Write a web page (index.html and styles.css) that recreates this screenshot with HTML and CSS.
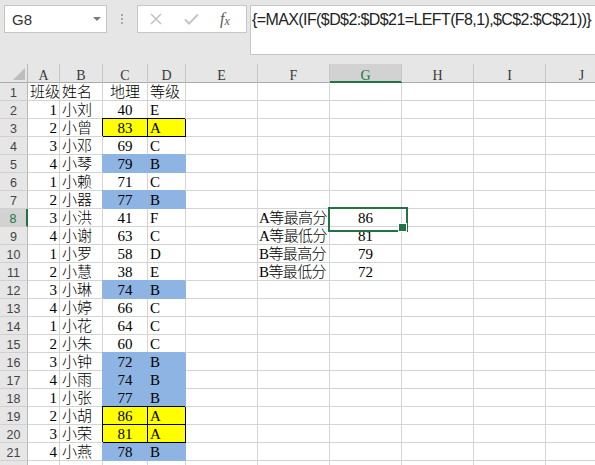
FILE: index.html
```html
<!DOCTYPE html>
<html lang="zh">
<head>
<meta charset="utf-8">
<link rel="stylesheet" href="styles.css">
</head>
<body>
<div class="toolbar">
  <div class="namebox"><span>G8</span><svg class="caret" width="8" height="4" viewBox="0 0 8 4"><polygon points="0,0 8,0 4,4" fill="#7a7a7a"/></svg></div>
  <div class="sep"><i></i><i></i><i></i></div>
  <div class="fxbox">
    <svg class="ic-x" width="12" height="12" viewBox="0 0 12 12"><path d="M1 1L11 11M11 1L1 11" stroke="#bdbdbd" stroke-width="1.4" fill="none"/></svg>
    <svg class="ic-ok" width="15" height="12" viewBox="0 0 15 12"><path d="M1 6.5L5 10.5L14 1.5" stroke="#c4c4c4" stroke-width="2" fill="none"/></svg>
    <span class="fx">f<span class="fxx">x</span></span>
  </div>
  <div class="formula">{=MAX(IF($D$2:$D$21=LEFT(F8,1),$C$2:$C$21))}</div>
</div>
<div class="sheet">
  <div class="grid">
    <div class="corner"><svg width="12" height="12" viewBox="0 0 12 12"><polygon points="12,0 12,12 0,12" fill="#bdbdbd"/></svg></div>
    <div class="h">A</div><div class="h">B</div><div class="h">C</div><div class="h">D</div><div class="h">E</div><div class="h">F</div><div class="h hs">G</div><div class="h">H</div><div class="h">I</div><div class="h">J</div>

    <div class="r">1</div><div class="c t">班级</div><div class="c t">姓名</div><div class="c m">地理</div><div class="c t">等级</div><div class="c"></div><div class="c"></div><div class="c"></div><div class="c"></div><div class="c"></div><div class="c"></div>
    <div class="r">2</div><div class="c n">1</div><div class="c t">小刘</div><div class="c m">40</div><div class="c t">E</div><div class="c"></div><div class="c"></div><div class="c"></div><div class="c"></div><div class="c"></div><div class="c"></div>
    <div class="r">3</div><div class="c n">2</div><div class="c t">小曾</div><div class="c m y">83</div><div class="c t y">A</div><div class="c"></div><div class="c"></div><div class="c"></div><div class="c"></div><div class="c"></div><div class="c"></div>
    <div class="r">4</div><div class="c n">3</div><div class="c t">小邓</div><div class="c m">69</div><div class="c t">C</div><div class="c"></div><div class="c"></div><div class="c"></div><div class="c"></div><div class="c"></div><div class="c"></div>
    <div class="r">5</div><div class="c n">4</div><div class="c t">小琴</div><div class="c m b">79</div><div class="c t b">B</div><div class="c"></div><div class="c"></div><div class="c"></div><div class="c"></div><div class="c"></div><div class="c"></div>
    <div class="r">6</div><div class="c n">1</div><div class="c t">小赖</div><div class="c m">71</div><div class="c t">C</div><div class="c"></div><div class="c"></div><div class="c"></div><div class="c"></div><div class="c"></div><div class="c"></div>
    <div class="r">7</div><div class="c n">2</div><div class="c t">小器</div><div class="c m b">77</div><div class="c t b">B</div><div class="c"></div><div class="c"></div><div class="c"></div><div class="c"></div><div class="c"></div><div class="c"></div>
    <div class="r rs">8</div><div class="c n">3</div><div class="c t">小洪</div><div class="c m">41</div><div class="c t">F</div><div class="c"></div><div class="c t lbl">A等最高分</div><div class="c m sel">86</div><div class="c"></div><div class="c"></div><div class="c"></div>
    <div class="r">9</div><div class="c n">4</div><div class="c t">小谢</div><div class="c m">63</div><div class="c t">C</div><div class="c"></div><div class="c t lbl">A等最低分</div><div class="c m">81</div><div class="c"></div><div class="c"></div><div class="c"></div>
    <div class="r">10</div><div class="c n">1</div><div class="c t">小罗</div><div class="c m">58</div><div class="c t">D</div><div class="c"></div><div class="c t lbl">B等最高分</div><div class="c m">79</div><div class="c"></div><div class="c"></div><div class="c"></div>
    <div class="r">11</div><div class="c n">2</div><div class="c t">小慧</div><div class="c m">38</div><div class="c t">E</div><div class="c"></div><div class="c t lbl">B等最低分</div><div class="c m">72</div><div class="c"></div><div class="c"></div><div class="c"></div>
    <div class="r">12</div><div class="c n">3</div><div class="c t">小琳</div><div class="c m b">74</div><div class="c t b">B</div><div class="c"></div><div class="c"></div><div class="c"></div><div class="c"></div><div class="c"></div><div class="c"></div>
    <div class="r">13</div><div class="c n">4</div><div class="c t">小婷</div><div class="c m">66</div><div class="c t">C</div><div class="c"></div><div class="c"></div><div class="c"></div><div class="c"></div><div class="c"></div><div class="c"></div>
    <div class="r">14</div><div class="c n">1</div><div class="c t">小花</div><div class="c m">64</div><div class="c t">C</div><div class="c"></div><div class="c"></div><div class="c"></div><div class="c"></div><div class="c"></div><div class="c"></div>
    <div class="r">15</div><div class="c n">2</div><div class="c t">小朱</div><div class="c m">60</div><div class="c t">C</div><div class="c"></div><div class="c"></div><div class="c"></div><div class="c"></div><div class="c"></div><div class="c"></div>
    <div class="r">16</div><div class="c n">3</div><div class="c t">小钟</div><div class="c m b">72</div><div class="c t b">B</div><div class="c"></div><div class="c"></div><div class="c"></div><div class="c"></div><div class="c"></div><div class="c"></div>
    <div class="r">17</div><div class="c n">4</div><div class="c t">小雨</div><div class="c m b">74</div><div class="c t b">B</div><div class="c"></div><div class="c"></div><div class="c"></div><div class="c"></div><div class="c"></div><div class="c"></div>
    <div class="r">18</div><div class="c n">1</div><div class="c t">小张</div><div class="c m b">77</div><div class="c t b">B</div><div class="c"></div><div class="c"></div><div class="c"></div><div class="c"></div><div class="c"></div><div class="c"></div>
    <div class="r">19</div><div class="c n">2</div><div class="c t">小胡</div><div class="c m y">86</div><div class="c t y">A</div><div class="c"></div><div class="c"></div><div class="c"></div><div class="c"></div><div class="c"></div><div class="c"></div>
    <div class="r">20</div><div class="c n">3</div><div class="c t">小荣</div><div class="c m y">81</div><div class="c t y">A</div><div class="c"></div><div class="c"></div><div class="c"></div><div class="c"></div><div class="c"></div><div class="c"></div>
    <div class="r">21</div><div class="c n">4</div><div class="c t">小燕</div><div class="c m b bl">78</div><div class="c t b bl">B</div><div class="c"></div><div class="c"></div><div class="c"></div><div class="c"></div><div class="c"></div><div class="c"></div>
    <div class="r"></div><div class="c"></div><div class="c"></div><div class="c"></div><div class="c"></div><div class="c"></div><div class="c"></div><div class="c"></div><div class="c"></div><div class="c"></div><div class="c"></div>
  </div>
</div>
</body>
</html>
```

FILE: styles.css
```css
* { box-sizing: border-box; }
html, body { margin: 0; padding: 0; }
body {
  width: 595px;
  height: 465px;
  overflow: hidden;
  background: #fff;
  font-family: "Liberation Serif", "Noto Sans CJK SC", serif;
}

/* ---------- toolbar ---------- */
.toolbar {
  height: 64px;
  background: #e6e6e6;
  display: flex;
  align-items: flex-start;
  padding: 5px 0 0 4px;
}
.namebox {
  flex: none;
  width: 103px;
  height: 28px;
  background: #fff;
  border: 1px solid #c6c6c6;
  display: flex;
  align-items: center;
  justify-content: space-between;
  padding: 0 5px 0 7px;
  font-family: "Liberation Sans", sans-serif;
  font-size: 15px;
  color: #333;
}
.caret { display: block; }
.sep {
  flex: none;
  width: 30px;
  display: flex;
  flex-direction: column;
  align-items: center;
  gap: 2px;
  padding-top: 9px;
}
.sep i {
  display: block;
  width: 2px;
  height: 2px;
  background: #a8a8a8;
}
.fxbox {
  flex: none;
  width: 110px;
  height: 28px;
  background: #fff;
  border: 1px solid #c6c6c6;
  display: flex;
  align-items: center;
  padding-left: 12px;
}
.ic-x { display: block; }
.ic-ok { display: block; margin-left: 22px; }
.fx {
  margin-left: 21px;
  font-family: "Liberation Serif", serif;
  font-style: italic;
  font-size: 16px;
  color: #5a5a5a;
  line-height: 1;
}
.fxx { font-size: 12px; position: relative; top: 1px; }
.formula {
  flex: none;
  width: 360px;
  height: 50px;
  margin-left: 3px;
  background: #fff;
  border: 1px solid #c6c6c6;
  padding: 4px 0 0 1px;
  font-family: "Liberation Sans", sans-serif;
  font-size: 16px;
  letter-spacing: -0.6px;
  line-height: 20px;
  color: #222;
  white-space: nowrap;
}

/* ---------- sheet ---------- */
.sheet {
  width: 595px;
  height: 401px;
  overflow: hidden;
}
.grid {
  display: grid;
  grid-template-columns: 28px 32px 43px 45px 38px 72px 72px 72px 72px 72px 72px;
  grid-template-rows: 19px;
  grid-auto-rows: 18px;
  width: 618px;
}
.corner {
  background: #e6e6e6;
  border-right: 1px solid #b8b8b8;
  border-bottom: 1px solid #ababab;
  display: flex;
  align-items: flex-end;
  justify-content: flex-end;
  padding: 0 2px 2px 0;
}
.corner svg { display: block; }
.h {
  background: #e6e6e6;
  border-right: 1px solid #c6c6c6;
  border-bottom: 1px solid #ababab;
  text-align: center;
  font-size: 14px;
  line-height: 15px;
  padding-top: 4px;
  color: #3a3a3a;
}
.hs {
  background: #d2d2d2;
  color: #217346;
  border-bottom: 2px solid #217346;
}
.r {
  background: #e6e6e6;
  border-right: 1px solid #b8b8b8;
  border-bottom: 1px solid #d0d0d0;
  text-align: center;
  font-family: "Liberation Sans", sans-serif;
  font-size: 12.5px;
  line-height: 17px;
  padding-top: 2px;
  color: #444;
}
.rs {
  background: #d2d2d2;
  color: #217346;
  border-right: 2px solid #217346;
}
.c {
  border-right: 1px solid #d4d4d4;
  border-bottom: 1px solid #d4d4d4;
  font-size: 15px;
  font-weight: 300;
  line-height: 17px;
  padding-top: 1px;
  color: #000;
  white-space: nowrap;
}
.n { text-align: right; padding-right: 2px; }
.t { text-align: left; padding-left: 2px; }
.m { text-align: center; }
.lbl { padding-left: 1px; letter-spacing: -0.6px; }
.y {
  background: #ffff00;
  border-right-color: #000;
  border-bottom-color: #000;
  box-shadow: -1px -1px 0 0 #000;
}
.b {
  background: #8db4e2;
  border-right-color: #8db4e2;
  border-bottom-color: #8db4e2;
  box-shadow: -1px -1px 0 0 #8db4e2;
}
.b.bl { box-shadow: -1px 0 0 0 #8db4e2; }
.sel { position: relative; }
.sel::after {
  content: "";
  position: absolute;
  left: -2px;
  top: -2px;
  width: 76px;
  height: 21px;
  border: 2px solid #217346;
}
.sel::before {
  content: "";
  position: absolute;
  left: 68px;
  top: 14px;
  width: 7px;
  height: 7px;
  background: #217346;
  border: 1px solid #fff;
  z-index: 1;
}
```
